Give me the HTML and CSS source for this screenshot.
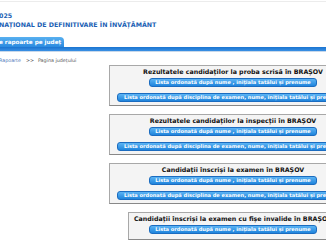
FILE: index.html
```html
<!DOCTYPE html>
<html lang="ro">
<head>
<meta charset="utf-8">
<title>Pagina județului</title>
<link rel="stylesheet" href="styles.css">
</head>
<body>
<div class="page">
  <header class="header">
    <div class="title-line">025</div>
    <div class="title-line">NAȚIONAL DE DEFINITIVARE ÎN ÎNVĂȚĂMÂNT</div>
  </header>
  <nav class="tabs">
    <div class="tab">e rapoarte pe județ</div>
  </nav>
  <div class="bar"></div>
  <div class="crumbs"><a class="crumb-link">Rapoarte</a><span class="sep">&gt;&gt;</span><span>Pagina județului</span></div>
  <main class="reports">
    <section class="box">
      <h2 class="box-title">Rezultatele candidaților la proba scrisă în BRAȘOV</h2>
      <button class="btn btn-short">Lista ordonată după nume , inițiala tatălui și prenume</button>
      <button class="btn btn-long">Lista ordonată după disciplina de examen, nume, inițiala tatălui și prenume</button>
    </section>
    <section class="box">
      <h2 class="box-title">Rezultatele candidaților la inspecții în BRAȘOV</h2>
      <button class="btn btn-short">Lista ordonată după nume , inițiala tatălui și prenume</button>
      <button class="btn btn-long">Lista ordonată după disciplina de examen, nume, inițiala tatălui și prenume</button>
    </section>
    <section class="box">
      <h2 class="box-title">Candidații înscriși la examen în BRAȘOV</h2>
      <button class="btn btn-short">Lista ordonată după nume , inițiala tatălui și prenume</button>
      <button class="btn btn-long">Lista ordonată după disciplina de examen, nume, inițiala tatălui și prenume</button>
    </section>
    <section class="box box-narrow">
      <h2 class="box-title">Candidații înscriși la examen cu fișe invalide în BRAȘOV</h2>
      <button class="btn btn-short">Lista ordonată după nume , inițiala tatălui și prenume</button>
    </section>
  </main>
</div>
</body>
</html>
```
FILE: styles.css
```css
html, body {
  margin: 0;
  padding: 0;
  background: #ffffff;
  overflow: hidden;
}
body {
  font-family: "DejaVu Sans", Verdana, sans-serif;
  color: #222;
}
.page {
  border-top: 1px solid #ececec;
  margin-top: 1px;
}
.header {
  padding: 9px 0 0 0;
  margin-left: -1px;
  height: 26px;
}
.title-line {
  color: #1c5fb4;
  font-weight: bold;
  font-size: 6.3px;
  line-height: 9px;
  white-space: nowrap;
}
.tabs {
  display: flex;
  height: 10px;
}
.tab {
  width: 65px;
  box-sizing: border-box;
  margin-left: -1px;
  background: linear-gradient(#58b0f0, #2a8ae0);
  border-top-right-radius: 4px;
  color: #fff;
  font-weight: bold;
  font-size: 5.7px;
  line-height: 10px;
  white-space: nowrap;
  overflow: hidden;
}
.bar {
  height: 4px;
  background: linear-gradient(#1a74d0, #3a90e4);
  border-bottom: 1px solid #c8d8ea;
}
.crumbs {
  margin-top: 5px;
  margin-left: -1px;
  font-size: 4.8px;
  line-height: 7px;
  color: #555;
  white-space: nowrap;
}
.crumb-link {
  color: #4a78b8;
}
.sep {
  margin: 0 4px 0 5px;
}
.reports {
  margin-left: 100px;
  width: 266px;
  display: flex;
  flex-direction: column;
  align-items: center;
  gap: 8px;
  margin-top: 1px;
}
.box {
  width: 248px;
  height: 41px;
  box-sizing: border-box;
  flex: none;
  border: 1px solid #a8a8a8;
  border-bottom-color: #888;
  background: #f4f4f4;
  display: flex;
  flex-direction: column;
  align-items: center;
  padding-top: 2px;
}
.box-narrow {
  width: 210px;
  height: 28px;
}
.box-title {
  margin: 0;
  font-size: 6.3px;
  line-height: 8px;
  font-weight: bold;
  color: #111;
  white-space: nowrap;
}
.btn {
  font-family: "DejaVu Sans", Verdana, sans-serif;
  font-weight: bold;
  font-size: 5.1px;
  height: 9px;
  line-height: 7px;
  padding: 0 4px;
  border: 1px solid #1b6cc0;
  border-radius: 3px;
  background: linear-gradient(#5cb4f4, #1f84dc);
  color: #fff;
  white-space: nowrap;
  flex: none;
}
.btn-short {
  width: 168px;
  margin-top: 2px;
}
.btn-long {
  width: 232px;
  margin-top: 6px;
}
```
